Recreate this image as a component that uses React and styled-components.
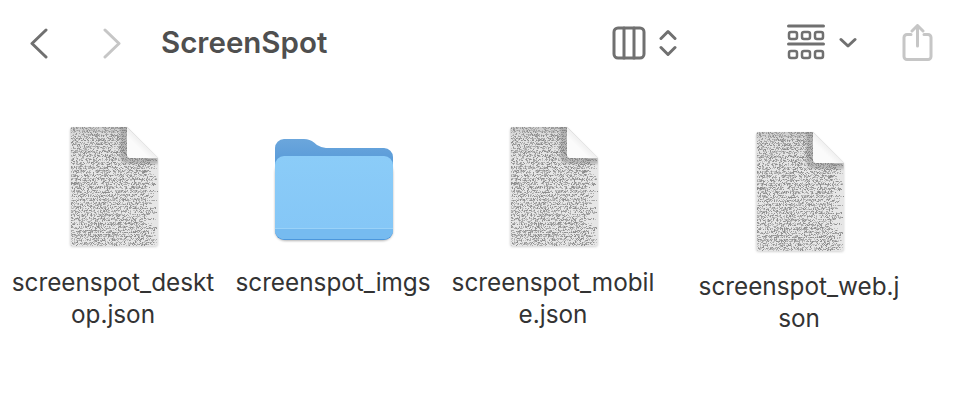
import React from 'react';
import styled, { createGlobalStyle } from 'styled-components';

const Global = createGlobalStyle`
  html, body { margin: 0; background: #fff; }
  body { font-family: Inter, "Liberation Sans", sans-serif; }
`;

const Page = styled.div`
  width: 964px;
  height: 402px;
  overflow: hidden;
  background: #fff;
`;

const Toolbar = styled.header`
  height: 86px;
  display: flex;
  align-items: center;
`;

const Glyph = styled.svg`
  display: block;
  flex: none;
  fill: none;
  stroke: ${p => (p.$muted ? '#c6c6c6' : '#707070')};
  stroke-width: 3;
  stroke-linecap: round;
  stroke-linejoin: round;
  margin-left: ${p => p.$gap || 0}px;
`;

const Title = styled.h1`
  margin: 0 0 0 39px;
  width: 300px;
  font-size: 29.5px;
  font-weight: 600;
  color: #4f4f4f;
  line-height: 1;
`;

const Grid = styled.main`
  display: flex;
  align-items: flex-start;
  padding: 36px 0 0 3px;
`;

const Item = styled.figure`
  margin: ${p => (p.$dropped ? '5px 0 0 26px' : 0)};
  width: 220px;
  display: flex;
  flex-direction: column;
  align-items: center;
`;

const Thumb = styled.svg`
  display: block;
  width: 130px;
  height: 130px;
`;

const Label = styled.figcaption`
  margin-top: ${p => (p.$dropped ? 13 : 14)}px;
  text-align: center;
  font-size: 24.3px;
  line-height: 32px;
  color: #333;
  white-space: pre;
`;

function buildSpeckle() {
  let seed = 12345;
  const rnd = () => {
    seed = (seed * 1664525 + 1013904223) >>> 0;
    return seed / 4294967296;
  };
  const buckets = ['', '', ''];
  for (let y = 0; y < 122; y += 1) {
    const gapRow = y % 4 === 3;
    const lineEnd = 76 + rnd() * 12;
    for (let x = 1; x < 88; x += 1) {
      const inFold = x > 56 && y < x - 56 + 4;
      if (inFold || x > lineEnd) continue;
      const density = gapRow ? 0.25 : 0.6;
      if (rnd() < density) {
        const b = rnd();
        const idx = b < 0.25 ? 0 : b < 0.65 ? 1 : 2;
        buckets[idx] += `M${x} ${y}h1v1h-1z`;
      }
    }
  }
  return buckets;
}
const speckle = buildSpeckle();

const DocIcon = ({ id }) => (
  <Thumb viewBox="-2 0 130 130">
    <defs>
      <clipPath id={`page-${id}`}>
        <path d="M23 5h54l31 31v85a3 3 0 0 1-3 3H23a3 3 0 0 1-3-3V8a3 3 0 0 1 3-3z" />
      </clipPath>
      <linearGradient id={`top-${id}`} x1="0" y1="0" x2="0" y2="1">
        <stop offset="0" stopColor="#8c8c8c" stopOpacity="0.3" />
        <stop offset="0.25" stopColor="#8c8c8c" stopOpacity="0.06" />
        <stop offset="1" stopColor="#8c8c8c" stopOpacity="0" />
      </linearGradient>
      <linearGradient id={`fold-${id}`} x1="0" y1="1" x2="1" y2="0">
        <stop offset="0.35" stopColor="#fbfbfb" />
        <stop offset="0.62" stopColor="#e6e6e6" />
        <stop offset="1" stopColor="#f4f4f4" />
      </linearGradient>
      <filter id={`soft-${id}`} x="-5%" y="-5%" width="110%" height="110%">
        <feGaussianBlur stdDeviation="0.55" />
      </filter>
      <filter id={`drop-${id}`} x="-10%" y="-10%" width="120%" height="120%">
        <feGaussianBlur stdDeviation="1.2" />
      </filter>
    </defs>
    <path d="M23 6h54l31 31v85a3 3 0 0 1-3 3H23a3 3 0 0 1-3-3V9a3 3 0 0 1 3-3z" fill="#a8a8a8" opacity="0.5" filter={`url(#drop-${id})`} />
    <g clipPath={`url(#page-${id})`}>
      <rect x="20" y="5" width="88" height="119" fill="#e6e6e6" />
      <g transform="translate(20 4)" filter={`url(#soft-${id})`}>
        <path d={speckle[0]} fill="#8e8e8e" />
        <path d={speckle[1]} fill="#a8a8a8" />
        <path d={speckle[2]} fill="#c2c2c2" />
      </g>
      <rect x="20" y="5" width="88" height="40" fill={`url(#top-${id})`} />
      <path d="M70 5h8L108 36v6H78q-8 0-8-8z" fill="#777" opacity="0.4" filter={`url(#drop-${id})`} />
    </g>
    <path d="M77 5l31 31H80a3 3 0 0 1-3-3z" fill={`url(#fold-${id})`} />
  </Thumb>
);

const FolderIcon = () => (
  <Thumb viewBox="-1 0 130 130">
    <defs>
      <linearGradient id="folder-back" x1="0" y1="0" x2="0" y2="1">
        <stop offset="0" stopColor="#6ba6dc" />
        <stop offset="1" stopColor="#4690d6" />
      </linearGradient>
      <linearGradient id="folder-front" x1="0" y1="0" x2="0" y2="1">
        <stop offset="0" stopColor="#8bccf8" />
        <stop offset="1" stopColor="#84c6f6" />
      </linearGradient>
      <filter id="folder-shadow" x="-10%" y="-10%" width="120%" height="120%">
        <feGaussianBlur stdDeviation="1" />
      </filter>
    </defs>
    <rect x="6" y="40" width="118" height="79" rx="10" fill="#777" opacity="0.55" filter="url(#folder-shadow)" />
    <path d="M6 26a9 9 0 0 1 9-9h20q6 0 10 3.500l3 2.500q5 3 9 3h58a9 9 0 0 1 9 9v30H6z" fill="url(#folder-back)" />
    <path d="M6 44a9 9 0 0 1 9-9h100a9 9 0 0 1 9 9v65a9 9 0 0 1-9 9H15a9 9 0 0 1-9-9z" fill="#4c97dc" />
    <path d="M6 43a9 9 0 0 1 9-9h100a9 9 0 0 1 9 9v65a9 9 0 0 1-9 9H15a9 9 0 0 1-9-9z" fill="url(#folder-front)" />
    <path d="M6 106h118v2a9 9 0 0 1-9 9H15a9 9 0 0 1-9-9z" fill="#76bbf0" />
    <rect x="6" y="106" width="118" height="1" fill="#9ad2f8" />
  </Thumb>
);

const files = [
  { name: 'screenspot_deskt\nop.json' },
  { name: 'screenspot_imgs', folder: true },
  { name: 'screenspot_mobil\ne.json' },
  { name: 'screenspot_web.j\nson', dropped: true },
];

export default function App() {
  return (
    <Page>
      <Global />
      <Toolbar>
        <Glyph width="20" height="32" viewBox="0 0 20 32" $gap={28}>
          <path d="M18 3L4 16.500 18 30" />
        </Glyph>
        <Glyph $muted width="20" height="32" viewBox="0 0 20 32" $gap={54}>
          <path d="M3 3l14 13.500L3 30" />
        </Glyph>
        <Title>ScreenSpot</Title>
        <Glyph width="34" height="34" viewBox="0 0 34 34" $gap={151}>
          <rect x="2" y="2" width="30" height="30" rx="4" />
          <path d="M12 2v30M22 2v30" />
        </Glyph>
        <Glyph width="18" height="28" viewBox="0 0 18 28" $gap={13}>
          <path d="M2 9.500l7-7 7 7M2 18.500l7 7 7-7" />
        </Glyph>
        <Glyph width="38" height="38" viewBox="0 0 38 38" $gap={110}>
          <path d="M1.500 2h35M1.500 20h35" />
          <rect x="2" y="8" width="8" height="7" rx="2" strokeWidth="2.500" />
          <rect x="15" y="8" width="8" height="7" rx="2" strokeWidth="2.500" />
          <rect x="28" y="8" width="8" height="7" rx="2" strokeWidth="2.500" />
          <rect x="2" y="27" width="8" height="7" rx="2" strokeWidth="2.500" />
          <rect x="15" y="27" width="8" height="7" rx="2" strokeWidth="2.500" />
          <rect x="28" y="27" width="8" height="7" rx="2" strokeWidth="2.500" />
        </Glyph>
        <Glyph width="18" height="12" viewBox="0 0 18 12" $gap={14}>
          <path d="M2 2.500l7 6.500 7-6.500" />
        </Glyph>
        <Glyph $muted width="31" height="38" viewBox="0 0 31 38" $gap={45}>
          <path d="M9 10.500H5a3 3 0 0 0-3 3v19a3 3 0 0 0 3 3h21a3 3 0 0 0 3-3v-19a3 3 0 0 0-3-3h-4" />
          <path d="M15.500 22V1.500M10 7l5.500-5.500L21 7" />
        </Glyph>
      </Toolbar>
      <Grid>
        {files.map((f, i) => (
          <Item key={f.name} $dropped={f.dropped}>
            {f.folder ? <FolderIcon /> : <DocIcon id={i} />}
            <Label $dropped={f.dropped}>{f.name}</Label>
          </Item>
        ))}
      </Grid>
    </Page>
  );
}
